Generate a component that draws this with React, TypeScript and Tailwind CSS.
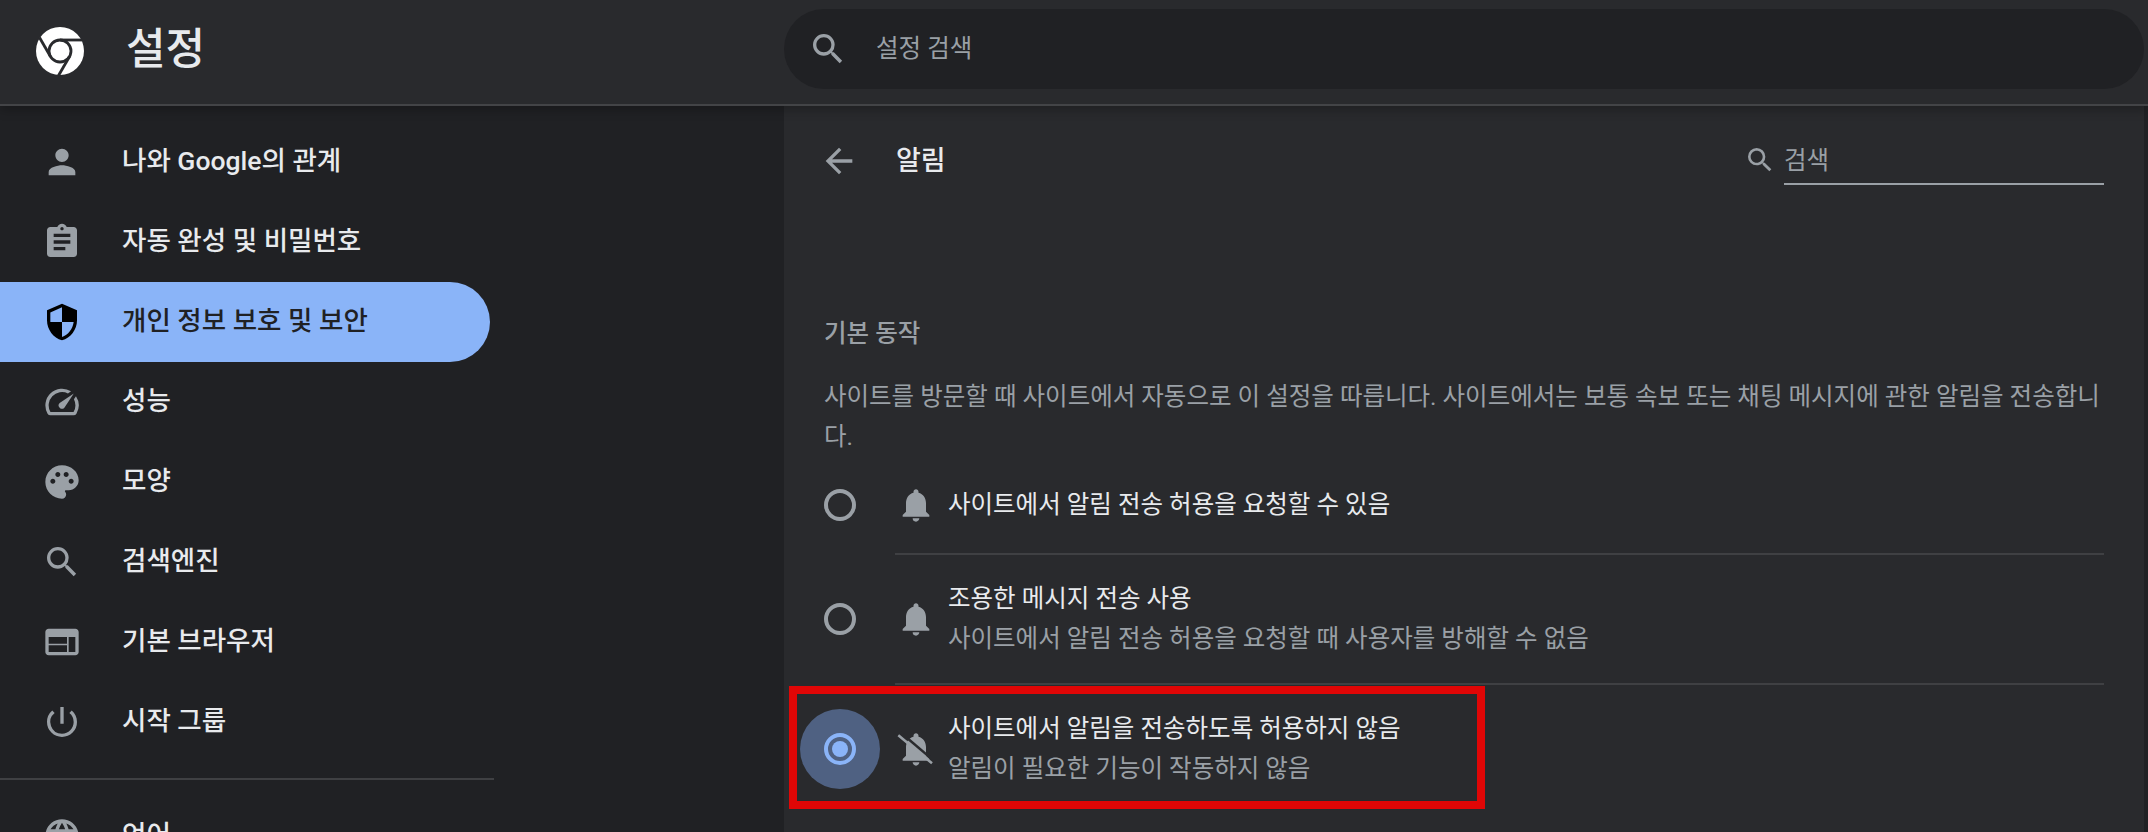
import { MdPerson, MdAssignment, MdSecurity, MdSpeed, MdPalette, MdSearch, MdWeb, MdPowerSettingsNew, MdLanguage, MdArrowBack, MdNotifications } from 'react-icons/md';

const FONT = "font-['Roboto','Noto_Sans_CJK_KR',sans-serif]";

const navItems = [
  { label: '나와 Google의 관계', icon: MdPerson },
  { label: '자동 완성 및 비밀번호', icon: MdAssignment },
  { label: '개인 정보 보호 및 보안', icon: MdSecurity, active: true },
  { label: '성능', icon: MdSpeed },
  { label: '모양', icon: MdPalette },
  { label: '검색엔진', icon: MdSearch },
  { label: '기본 브라우저', icon: MdWeb },
  { label: '시작 그룹', icon: MdPowerSettingsNew },
];

function ChromeLogo() {
  return (
    <svg width="48" height="48" viewBox="0 0 48 48" className="shrink-0">
      <circle cx="24" cy="24" r="24" fill="#ffffff" />
      <circle cx="24" cy="24" r="11" fill="#ffffff" stroke="#292a2d" strokeWidth="2.8" />
      {[0, 120, 240].map((deg) => (
        <path key={deg} d="M24 13H46" stroke="#292a2d" strokeWidth="2.8" transform={`rotate(${deg} 24 24)`} />
      ))}
    </svg>
  );
}

function BellOff({ size, className }: { size: number; className?: string }) {
  return (
    <svg width={size} height={size} viewBox="0 0 24 24" className={className}>
      <path
        fill="currentColor"
        d="M12 22c1.1 0 2-.9 2-2h-4c0 1.1.89 2 2 2zm6-6v-5c0-3.07-1.64-5.64-4.5-6.32V4c0-.83-.67-1.5-1.5-1.5s-1.5.67-1.5 1.5v.68C7.63 5.36 6 7.92 6 11v5l-2 2v1h16v-1l-2-2z"
      />
      <path d="M2 3L22 20" stroke="#292a2d" strokeWidth="1.5" transform="translate(0.8 -0.9)" />
      <path d="M1.4 3.7L21.6 20.6" stroke="currentColor" strokeWidth="1.5" />
    </svg>
  );
}

function NavRow({ label, icon: Icon, active }: { label: string; icon: typeof MdPerson; active?: boolean }) {
  return (
    <div className={`flex h-20 w-[490px] items-center rounded-r-[40px] pl-[42px] ${active ? 'bg-[#8ab4f8] text-[#202124]' : 'text-[#e8eaed]'}`}>
      <Icon size={40} className={active ? 'text-black' : 'text-[#9aa0a6]'} />
      <span className="ml-10 pb-[2px] text-[26.5px] font-medium">{label}</span>
    </div>
  );
}

function Radio({ checked }: { checked?: boolean }) {
  return (
    <div className={`flex h-8 w-8 items-center justify-center rounded-full border-[4px] ${checked ? 'border-[#8ab4f8]' : 'border-[#9aa0a6]'}`}>
      {checked && <div className="h-4 w-4 rounded-full bg-[#8ab4f8]" />}
    </div>
  );
}

function OptionRow({ title, sub, icon: Icon, checked }: { title: string; sub?: string; icon: React.ComponentType<{ size: number; className?: string }>; checked?: boolean }) {
  return (
    <div className="flex h-full items-center">
      <div className="flex w-20 shrink-0 items-center justify-center">
        {checked ? (
          <div className="flex h-20 w-20 shrink-0 items-center justify-center rounded-full bg-[#4f6182]">
            <Radio checked />
          </div>
        ) : (
          <Radio />
        )}
      </div>
      <Icon size={40} className="ml-4 shrink-0 text-[#9aa0a6]" />
      <div className="ml-3">
        <div className="text-[24.5px] leading-10 text-[#e8eaed]">{title}</div>
        {sub && <div className="text-[24.5px] leading-10 text-[#9aa0a6]">{sub}</div>}
      </div>
    </div>
  );
}

export default function App() {
  return (
    <div className={`flex h-[832px] w-[2148px] flex-col overflow-hidden bg-[#202124] ${FONT}`}>
      {/* Toolbar */}
      <header className="relative z-10 flex h-[106px] shrink-0 items-start border-b-2 border-[#434447] bg-[#292a2d] shadow-[0_4px_10px_rgba(0,0,0,0.25)]">
        <div className="flex w-[784px] shrink-0 items-center pl-9 pt-[25px]">
          <ChromeLogo />
          <span className="ml-[42px] pb-[4px] text-[43px] leading-[48px] font-medium text-[#e8eaed]">설정</span>
        </div>
        <div className="mt-[9px] flex h-20 w-[1360px] items-center rounded-full bg-[#202124] pl-6">
          <MdSearch size={40} className="text-[#9aa0a6]" />
          <span className="ml-7 text-[24.5px] text-[#9aa0a6]">설정 검색</span>
        </div>
      </header>

      <div className="flex min-h-0 flex-1">
        {/* Sidebar */}
        <aside className="w-[784px] shrink-0 pt-4">
          {navItems.map((item) => (
            <NavRow key={item.label} label={item.label} icon={item.icon} active={item.active} />
          ))}
          <div className="mt-4 h-0.5 w-[494px] bg-[#3f4043]" />
          <div className="mt-4">
            <NavRow label="언어" icon={MdLanguage} />
          </div>
        </aside>

        {/* Notification settings */}
        <main className="w-[1360px] shrink-0 bg-[#292a2d] pr-10 pl-10">
          <div className="flex h-[112px] items-center pb-[2px]">
            <MdArrowBack size={40} className="-ml-[5px] text-[#9aa0a6]" />
            <span className="ml-[37px] pt-[1px] text-[27px] font-medium text-[#e8eaed]">알림</span>
            <div className="ml-auto flex items-start">
              <MdSearch size={32} className="mt-[7px] text-[#9aa0a6]" />
              <div className="ml-2 h-[48px] w-[320px] border-b-2 border-[#9aa0a6] pt-[6px] text-[24.5px] text-[#9aa0a6]">검색</div>
            </div>
          </div>

          <h2 className="mt-[100px] text-[24.5px] leading-8 font-medium text-[#9aa0a6]">기본 동작</h2>
          <p className="mt-[27px] text-[24.5px] leading-10 text-[#9aa0a6]">
            사이트를 방문할 때 사이트에서 자동으로 이 설정을 따릅니다. 사이트에서는 보통 속보 또는 채팅 메시지에 관한 알림을 전송합니다.
          </p>

          <div className="-ml-6">
            <div className="h-[96px]">
              <OptionRow title="사이트에서 알림 전송 허용을 요청할 수 있음" icon={MdNotifications} />
            </div>
            <div className="ml-[95px] h-0.5 bg-[#3f4043]" />
            <div className="h-[128px]">
              <OptionRow title="조용한 메시지 전송 사용" sub="사이트에서 알림 전송 허용을 요청할 때 사용자를 방해할 수 없음" icon={MdNotifications} />
            </div>
            <div className="ml-[95px] h-0.5 bg-[#3f4043]" />
            <div className="relative h-[128px]">
              <OptionRow title="사이트에서 알림을 전송하도록 허용하지 않음" sub="알림이 필요한 기능이 작동하지 않음" icon={BellOff} checked />
              <div className="absolute top-[1px] left-[-11px] h-[123px] w-[696px] border-[8px] border-[#e00606]" />
            </div>
          </div>
        </main>
      </div>
    </div>
  );
}
